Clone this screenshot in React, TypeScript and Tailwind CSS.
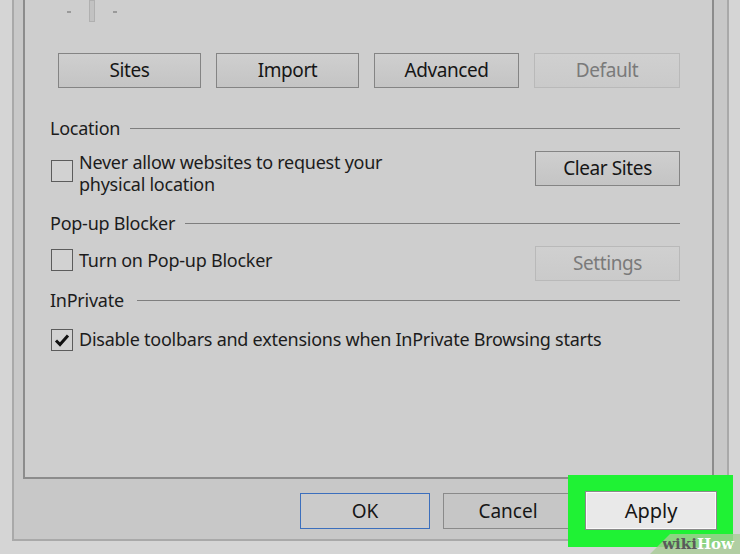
import React from 'react';

const font = { fontFamily: '"Noto Sans", "Open Sans", sans-serif' };

const Btn = ({ label, w, disabled = false }: { label: string; w: string; disabled?: boolean }) => (
    <div
        className={`${w} h-[35px] flex items-center justify-center border text-[19px] tracking-[-0.4px] bg-gradient-to-b from-[#cfcfcf] to-[#c4c4c4] ${
            disabled ? 'border-[#b9b9b9] text-[#7a7a7a] from-[#d0d0d0] to-[#cacaca]' : 'border-[#848484] text-[#161616]'
        }`}
    >
        {label}
    </div>
);

const Group = ({ title, line }: { title: string; line: string }) => (
    <div className="flex items-center h-[24px]">
        <span className="pl-[25px] text-[18px] tracking-[-0.25px] text-[#1c1c1c]">{title}</span>
        <div className={`${line} flex-1 h-px bg-[#7e7e7e] mr-[32px]`} />
    </div>
);

const Check = ({ checked = false }: { checked?: boolean }) => (
    <div className="w-[22px] h-[22px] shrink-0 border border-[#5c5c5c] bg-[#d2d2d2] flex items-center justify-center">
        {checked && (
            <svg width="16" height="14" viewBox="0 0 16 14">
                <path d="M2 7.5 L6 11.5 L14 2.5" fill="none" stroke="#111" strokeWidth="3" />
            </svg>
        )}
    </div>
);

export default function App() {
    return (
        <div className="relative w-[740px] h-[554px] overflow-hidden bg-[#d5d5d5] pl-[12px] pr-[11px] pb-[13px]" style={font}>
            <div className="h-full flex flex-col border-l-2 border-r-2 border-b-2 border-[#a9a9a9] bg-[#c8c8c8] pl-[9px] pr-[13px]">
                {/* tab panel */}
                <div className="h-[479px] shrink-0 border-l-2 border-r-2 border-b-2 border-[#8c8c8c] bg-[#cecece] flex flex-col">
                    <div className="flex items-start h-[24px] pl-[42px]">
                        <div className="w-[4px] h-[2px] bg-[#9a9a9a] mt-[11px]" />
                        <div className="w-[6px] h-[22px] ml-[18px] bg-[#c2c2c2] border border-[#b0b0b0]" />
                        <div className="w-[4px] h-[2px] bg-[#9a9a9a] mt-[11px] ml-[18px]" />
                    </div>
                    <div className="flex gap-[15px] pl-[33px] mt-[29px]">
                        <Btn label="Sites" w="w-[143px]" />
                        <Btn label="Import" w="w-[143px]" />
                        <Btn label="Advanced" w="w-[145px]" />
                        <Btn label="Default" w="w-[146px]" disabled />
                    </div>

                    <div className="mt-[28px]">
                        <Group title="Location" line="ml-[10px]" />
                    </div>
                    <div className="flex items-start justify-between mt-[11px] pl-[26px] pr-[32px]">
                        <div className="flex items-start gap-[6px] mt-[9px]">
                            <Check />
                            <div className="text-[18px] leading-[22px] tracking-[-0.25px] text-[#1c1c1c] -mt-[9px]">
                                Never allow websites to request your
                                <br />
                                physical location
                            </div>
                        </div>
                        <Btn label="Clear Sites" w="w-[145px]" />
                    </div>

                    <div className="mt-[16px]">
                        <Group title="Pop-up Blocker" line="ml-[10px]" />
                    </div>
                    <div className="flex items-center justify-between mt-[11px] pl-[26px] pr-[32px]">
                        <div className="flex items-center gap-[6px] -mt-[7px]">
                            <Check />
                            <span className="text-[18px] tracking-[-0.25px] text-[#1c1c1c]">Turn on Pop-up Blocker</span>
                        </div>
                        <Btn label="Settings" w="w-[145px]" disabled />
                    </div>

                    <div className="mt-[7px]">
                        <Group title="InPrivate" line="ml-[13px]" />
                    </div>
                    <div className="flex items-center gap-[6px] mt-[14px] pl-[26px]">
                        <Check checked />
                        <span className="text-[18px] tracking-[-0.25px] text-[#1c1c1c]">
                            Disable toolbars and extensions when InPrivate Browsing starts
                        </span>
                    </div>
                </div>

                {/* dialog buttons */}
                <div className="flex justify-end items-center gap-[13px] flex-1 pt-[4px] -mr-[4px]">
                    <div className="w-[130px] h-[36px] flex items-center justify-center border border-[#3c6fbd] bg-[#cbcbcb] text-[19px] text-[#161616]">
                        OK
                    </div>
                    <div className="w-[130px] h-[36px] flex items-center justify-center border border-[#8a8a8a] bg-[#c6c6c6] text-[19px] text-[#161616]">
                        Cancel
                    </div>
                    <div className="w-[132px] h-[38px]" />
                </div>
            </div>

            {/* highlighted Apply */}
            <div className="absolute left-[568px] top-[475px] w-[165px] h-[72px] bg-[#1ff234] flex items-start pl-[17px] pt-[16px]">
                <div className="w-[132px] h-[39px] border border-[#8a8a8a] bg-[#e9e9e9] outline outline-1 -outline-offset-2 outline-[#fafafa] flex items-center justify-center text-[20px] text-[#161616]">
                    Apply
                </div>
            </div>

            {/* watermark */}
            <div className="absolute right-0 bottom-0 w-[90px] h-[20px] bg-[#a8cc96]/80 [clip-path:polygon(20px_0,100%_0,100%_100%,0_100%)] flex items-center justify-end pr-[6px]">
                <span className="text-[15px] font-bold leading-none" style={{ fontFamily: '"DejaVu Serif", serif' }}>
                    <span className="text-[#5a5a5a]">wiki</span>
                    <span className="text-white">How</span>
                </span>
            </div>
        </div>
    );
}
